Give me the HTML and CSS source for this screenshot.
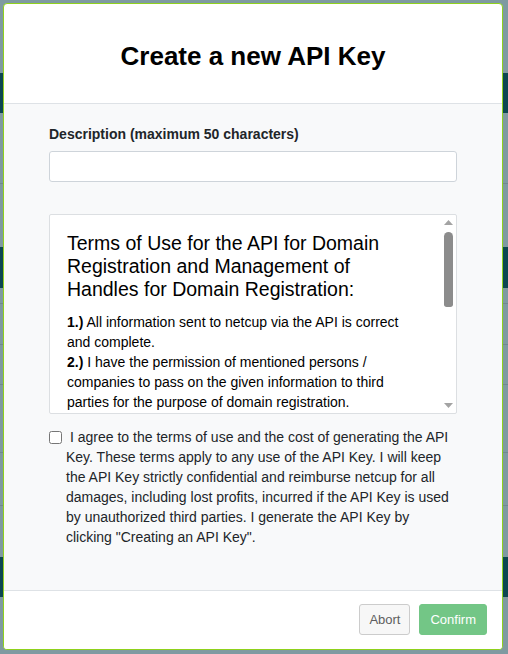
FILE: index.html
```html
<!DOCTYPE html>
<html lang="en">
<head>
<meta charset="utf-8">
<title>Create a new API Key</title>
<link rel="stylesheet" href="styles.css">
</head>
<body>
<div class="page">
  <div class="row r1"></div>
  <div class="row dark r2"></div>
  <div class="row r3"></div>
  <div class="row r4"></div>
  <div class="row dark r5"></div>
  <div class="row r6"></div>
  <div class="row r7"></div>
  <div class="row r8"></div>
  <div class="row r9"></div>
  <div class="row r10"></div>
  <div class="row r11"></div>
  <div class="row dark r12"></div>
  <div class="row last"></div>
</div>

<div class="modal">
  <div class="modal-header">
    <h1 class="modal-title">Create a new API Key</h1>
  </div>
  <div class="modal-body">
    <label class="field-label" for="desc">Description (maximum 50 characters)</label>
    <input class="field-input" id="desc" type="text">
    <div class="terms">
      <div class="terms-content">
        <h2 class="terms-title">Terms of Use for the API for Domain Registration and Management of Handles for Domain Registration:</h2>
        <p class="terms-text"><b>1.)</b> All information sent to netcup via the API is correct and complete.<br>
        <b>2.)</b> I have the permission of mentioned persons / companies to pass on the given information to third parties for the purpose of domain registration.</p>
      </div>
      <div class="scrollbar">
        <div class="sb-btn"><svg width="9" height="5" viewBox="0 0 9 5"><polygon points="0,5 4.5,0 9,5" fill="#a3a3a3"/></svg></div>
        <div class="sb-track"><div class="sb-thumb"></div></div>
        <div class="sb-btn"><svg width="9" height="5" viewBox="0 0 9 5"><polygon points="0,0 9,0 4.5,5" fill="#a3a3a3"/></svg></div>
      </div>
    </div>
    <label class="agree"><input class="check" type="checkbox"><span class="agree-text">I agree to the terms of use and the cost of generating the API Key. These terms apply to any use of the API Key. I will keep the API Key strictly confidential and reimburse netcup for all damages, including lost profits, incurred if the API Key is used by unauthorized third parties. I generate the API Key by clicking "Creating an API Key".</span></label>
  </div>
  <div class="modal-footer">
    <button class="btn btn-abort" type="button">Abort</button>
    <button class="btn btn-confirm" type="button" disabled>Confirm</button>
  </div>
</div>
</body>
</html>
```

FILE: styles.css
```css
html, body {
  margin: 0;
  padding: 0;
}
body {
  width: 508px;
  height: 654px;
  overflow: hidden;
  background: #7f9aa1;
  font-family: "Liberation Sans", Arial, sans-serif;
  position: relative;
}
.page {
  display: flex;
  flex-direction: column;
}
.row {
  background: #7f9aa1;
  border-bottom: 1px solid #71898f;
}
.row.dark {
  background: #0c4650;
  border-bottom: none;
}
.r1 { height: 73px; border-bottom: none; }
.r2 { height: 40px; }
.r3 { height: 70px; }
.r4 { height: 63px; border-bottom: none; }
.r5 { height: 41px; }
.r6 { height: 15px; }
.r7 { height: 40px; }
.r8 { height: 39px; }
.r9 { height: 67px; }
.r10 { height: 52px; }
.r11 { height: 51px; border-bottom: none; }
.r12 { height: 40px; }
.last { height: 60px; border-bottom: none; }

.modal {
  position: absolute;
  left: 3px;
  top: 3px;
  width: 500px;
  height: 647px;
  box-sizing: border-box;
  border: 1px solid #8fd11c;
  border-radius: 4px;
  background: #fff;
  display: flex;
  flex-direction: column;
  overflow: hidden;
}
.modal-header {
  height: 100px;
  flex: none;
  box-sizing: border-box;
  border-bottom: 1px solid #dee2e6;
  display: flex;
  align-items: center;
  justify-content: center;
}
.modal-title {
  margin: 0;
  font-size: 26px;
  font-weight: bold;
  color: #000;
  line-height: 30px;
  position: relative;
  top: 2px;
}
.modal-body {
  flex: 1;
  background: #f8f9fa;
  padding: 20px 45px 0;
  display: flex;
  flex-direction: column;
}
.field-label {
  font-size: 14px;
  font-weight: bold;
  line-height: 20px;
  color: #212529;
}
.field-input {
  margin: 7px 0 0;
  height: 31px;
  box-sizing: border-box;
  border: 1px solid #ced4da;
  border-radius: 3px;
  background: #fff;
  padding: 0 10px;
  font: 14px "Liberation Sans", Arial, sans-serif;
}
.terms {
  margin-top: 32px;
  height: 200px;
  box-sizing: border-box;
  border: 1px solid #dcdfe2;
  border-radius: 2px;
  background: #fff;
  display: flex;
  color: #000;
}
.terms-content {
  flex: 1;
  overflow: hidden;
  padding: 17px 18px 0 17px;
}
.terms-title {
  margin: 0 0 11px;
  font-size: 19.5px;
  font-weight: normal;
  line-height: 23px;
}
.terms-text {
  margin: 0;
  font-size: 14px;
  line-height: 20px;
}
.scrollbar {
  width: 15px;
  flex: none;
  display: flex;
  flex-direction: column;
}
.sb-btn {
  height: 15px;
  display: flex;
  align-items: center;
  justify-content: center;
}
.sb-track {
  flex: 1;
  padding-top: 2px;
  display: flex;
  justify-content: center;
}
.sb-thumb {
  width: 9px;
  height: 75px;
  background: #8c8c8c;
  border-radius: 5px 5px 3px 3px;
}
.agree {
  margin-top: 13px;
  display: flex;
  align-items: flex-start;
  font-size: 14px;
  line-height: 20px;
  color: #212529;
}
.check {
  flex: none;
  width: 13px;
  height: 13px;
  margin: 4px 4px 0 0;
}
.agree-text {
  text-indent: 4px;
}
.modal-footer {
  height: 59px;
  flex: none;
  box-sizing: border-box;
  border-top: 1px solid #dee2e6;
  background: #fff;
  display: flex;
  align-items: flex-start;
  justify-content: flex-end;
  gap: 9px;
  padding: 13px 15px 0 0;
}
.btn {
  height: 31px;
  box-sizing: border-box;
  padding: 0 10px;
  border-radius: 3px;
  font: 13px "Liberation Sans", Arial, sans-serif;
}
.btn-abort {
  background: #f7f7f7;
  border: 1px solid #cccccc;
  color: #5e5e5e;
  padding: 0 9px;
}
.btn-confirm {
  background: #73c686;
  border: 1px solid #73c686;
  color: #fff;
}
```
